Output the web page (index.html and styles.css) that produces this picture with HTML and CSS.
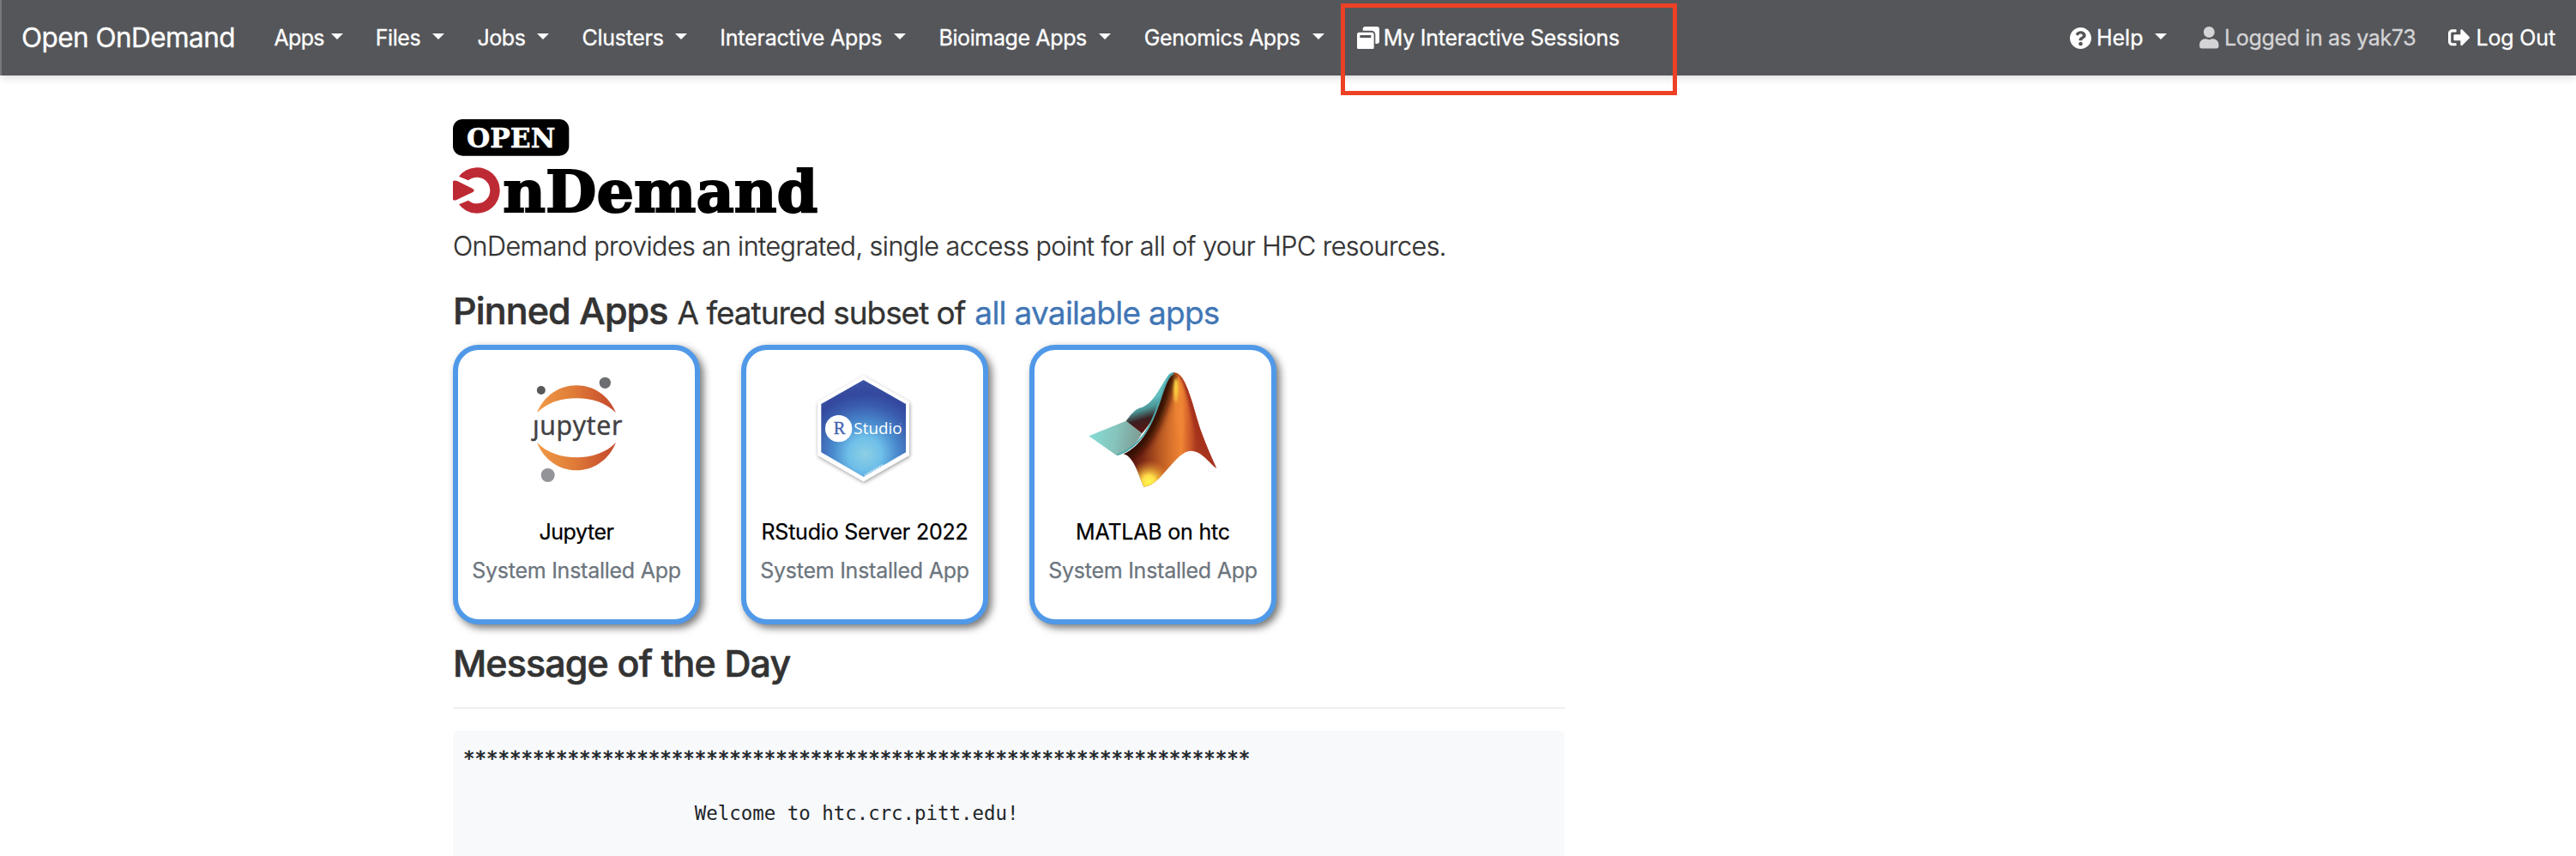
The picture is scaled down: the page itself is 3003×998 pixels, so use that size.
FILE: index.html
```
<!DOCTYPE html>
<html lang="en">
<head>
<meta charset="utf-8">
<title>Open OnDemand</title>
<link rel="stylesheet" href="styles.css">
</head>
<body>
<header class="navbar">
  <a class="brand">Open OnDemand</a>
  <nav class="menu">
    <a class="item apps"><span>Apps</span><i class="caret"></i></a>
    <a class="item files"><span>Files</span><i class="caret"></i></a>
    <a class="item jobs"><span>Jobs</span><i class="caret"></i></a>
    <a class="item clusters"><span>Clusters</span><i class="caret"></i></a>
    <a class="item interactive"><span>Interactive Apps</span><i class="caret"></i></a>
    <a class="item bioimage"><span>Bioimage Apps</span><i class="caret"></i></a>
    <a class="item genomics"><span>Genomics Apps</span><i class="caret"></i></a>
    <a class="item sessions">
      <svg class="icon-windows" viewBox="0 0 78 80"><path d="M20 14V9a9 9 0 0 1 9-9h40a9 9 0 0 1 9 9v42a9 9 0 0 1-9 9h-5V28a14 14 0 0 0-14-14z"/><path fill-rule="evenodd" d="M8 20h43a8 8 0 0 1 8 8v44a8 8 0 0 1-8 8H8a8 8 0 0 1-8-8V28a8 8 0 0 1 8-8zm4 10a2 2 0 0 0-2 2v7h39v-7a2 2 0 0 0-2-2z"/></svg>
      <span>My Interactive Sessions</span>
    </a>
  </nav>
  <nav class="account">
    <a class="item help">
      <svg class="icon-help" viewBox="8 8 496 496"><path d="M504 256c0 136.997-111.043 248-248 248S8 392.997 8 256C8 119.083 119.043 8 256 8s248 111.083 248 248zM262.655 90c-54.497 0-89.255 22.957-116.549 63.758-3.536 5.286-2.353 12.415 2.715 16.258l34.699 26.31c5.205 3.947 12.621 3.008 16.665-2.122 17.864-22.658 30.113-35.797 57.303-35.797 20.429 0 45.698 13.148 45.698 32.958 0 14.976-12.363 22.667-32.534 33.976C247.128 238.528 216 254.941 216 296v4c0 6.627 5.373 12 12 12h56c6.627 0 12-5.373 12-12v-1.333c0-28.462 83.186-29.647 83.186-106.667 0-58.002-60.165-102-116.531-102zM256 338c-25.365 0-46 20.635-46 46 0 25.364 20.635 46 46 46s46-20.636 46-46c0-25.364-20.635-46-46-46z"/></svg>
      <span>Help</span><i class="caret"></i>
    </a>
    <span class="item user">
      <svg class="icon-user" viewBox="0 0 448 512"><path d="M224 256c70.7 0 128-57.3 128-128S294.7 0 224 0 96 57.3 96 128s57.3 128 128 128zm89.600 32h-16.700c-22.200 10.200-46.900 16-72.900 16s-50.600-5.800-72.900-16h-16.700C60.200 288 0 348.200 0 422.400V464c0 26.500 21.500 48 48 48h352c26.500 0 48-21.500 48-48v-41.600c0-74.200-60.200-134.400-134.400-134.400z"/></svg>
      <span>Logged in as yak73</span>
    </span>
    <a class="item logout">
      <svg class="icon-logout" viewBox="0 0 512 512"><path d="M497 273L329 441c-15 15-41 4.500-41-17v-96H152c-13.300 0-24-10.700-24-24v-96c0-13.300 10.700-24 24-24h136V88c0-21.400 25.900-32 41-17l168 168c9.300 9.400 9.300 24.600 0 34zM192 436v-40c0-6.600-5.400-12-12-12H96c-17.700 0-32-14.300-32-32V160c0-17.700 14.300-32 32-32h84c6.600 0 12-5.400 12-12V76c0-6.600-5.400-12-12-12H96c-53 0-96 43-96 96v192c0 53 43 96 96 96h84c6.600 0 12-5.400 12-12z"/></svg>
      <span>Log Out</span>
    </a>
  </nav>
  <div class="highlight"></div>
</header>

<main class="page">
  <svg class="logo" viewBox="84 36 1320 390" role="img" aria-label="Open OnDemand">
    <rect x="84" y="57" width="406" height="128" rx="34"/>
    <text class="slab" x="132" y="156" font-size="96" textLength="310" lengthAdjust="spacingAndGlyphs" fill="#fff" stroke="#fff" stroke-width="1.500">OPEN</text>
    <path fill="#be2a34" d="M105 257A80 80 0 1 1 105 355L138 341A46 46 0 1 0 138 271Z"/>
    <path fill="#be2a34" d="M84 274Q90 269 99 273L152 299Q164 306 152 313L97 339Q88 343 84 338Z"/>
    <text class="slab" x="259" y="380" font-size="203" textLength="1101" lengthAdjust="spacingAndGlyphs" stroke="#000" stroke-width="6">nDemand</text>
  </svg>
  <p class="tagline">OnDemand provides an integrated, single access point for all of your HPC resources.</p>

  <h2 class="heading pinned">Pinned Apps <small>A featured subset of</small> <a>all available apps</a></h2>

  <section class="cards">
    <article class="card">
      <svg class="art" viewBox="102 54 828 570">
        <defs><linearGradient id="jup" x1="378" x2="654" y1="0" y2="0" gradientUnits="userSpaceOnUse"><stop offset="0" stop-color="#f09a48"/><stop offset=".45" stop-color="#e07d38"/><stop offset=".85" stop-color="#cb5530"/><stop offset="1" stop-color="#c44c2e"/></linearGradient></defs>
        <g fill="url(#jup)"><path d="M378 274C403 213 456 178 516 178S629 213 654 274C620 239 570 223 516 223S412 239 378 274Z"/><path d="M378 378C403 439 456 475 516 475S629 439 654 378C620 413 570 430 516 430S412 413 378 378Z"/></g>
        <circle cx="392.500" cy="195" r="15" fill="#58585a"/><circle cx="616" cy="169" r="20" fill="#6d6e71"/><circle cx="416" cy="492" r="24" fill="#929497"/>
        <text class="humanist" x="363" y="351" font-size="91" textLength="313" fill="#414042" stroke="#414042" stroke-width="1.500">jupyter</text>
        <path fill="#fff" d="M362 272h26v26h-26z"/>
      </svg>
      <h3 class="app tight">Jupyter</h3>
      <p class="kind">System Installed App</p>
    </article>
    <article class="card">
      <svg class="art" viewBox="60 54 828 570">
        <defs>
          <radialGradient id="rs" cx="475" cy="418" r="265" gradientUnits="userSpaceOnUse"><stop offset="0" stop-color="#8dcfe4"/><stop offset=".22" stop-color="#6ebfe9"/><stop offset=".42" stop-color="#4a8bce"/><stop offset=".65" stop-color="#3a5cae"/><stop offset=".8" stop-color="#33489e"/><stop offset="1" stop-color="#3d55a5"/></radialGradient>
          <filter id="sh" x="-20%" y="-20%" width="140%" height="140%"><feDropShadow dx="2" dy="5" stdDeviation="6" flood-opacity=".4"/></filter>
        </defs>
        <path fill="#fff" filter="url(#sh)" d="M470 145L630 236V422L470 514L310 422V236Z"/>
        <path fill="url(#rs)" d="M470 159L618 243V412L470 498L322 412V243Z"/>
        <circle cx="383" cy="329" r="47" fill="#fff"/>
        <text class="serif" x="365" y="347" font-size="62" textLength="41" fill="#3f64b0" stroke="#3f64b0">R</text>
        <text class="humanist" x="436" y="349" font-size="57" textLength="169" lengthAdjust="spacingAndGlyphs" fill="#fff">Studio</text>
        <circle cx="599" cy="312" r="2.500" fill="none" stroke="#b9a4c8"/>
        <path d="M474 492L538 455" stroke="#d5e8f4" stroke-width="5" stroke-dasharray="3 2"/>
      </svg>
      <h3 class="app">RStudio Server 2022</h3>
      <p class="kind">System Installed App</p>
    </article>
    <article class="card">
      <svg class="art" viewBox="78 54 828 570">
        <defs>
          <linearGradient id="m1" x1="268" y1="340" x2="450" y2="370" gradientUnits="userSpaceOnUse"><stop offset="0" stop-color="#85ddd5"/><stop offset=".5" stop-color="#86c5bd"/><stop offset="1" stop-color="#7d9a92"/></linearGradient>
          <linearGradient id="m2" x1="440" y1="235" x2="470" y2="335" gradientUnits="userSpaceOnUse"><stop offset="0" stop-color="#62bfc0"/><stop offset=".3" stop-color="#4b9596"/><stop offset=".62" stop-color="#3b1f20"/><stop offset="1" stop-color="#5a1815"/></linearGradient>
          <linearGradient id="m3" x1="390" y1="0" x2="715" y2="0" gradientUnits="userSpaceOnUse"><stop offset="0" stop-color="#4a120e"/><stop offset=".2" stop-color="#7a2916"/><stop offset=".38" stop-color="#b65722"/><stop offset=".52" stop-color="#dc742c"/><stop offset=".62" stop-color="#f08534"/><stop offset=".7" stop-color="#d2602a"/><stop offset=".78" stop-color="#a93a20"/><stop offset="1" stop-color="#a6321d"/></linearGradient>
          <radialGradient id="m4" cx="478" cy="515" r="75" gradientUnits="userSpaceOnUse"><stop offset="0" stop-color="#fff750"/><stop offset=".3" stop-color="#ffdc48"/><stop offset="1" stop-color="#f08a2c" stop-opacity="0"/></radialGradient>
          <clipPath id="mc"><path d="M567 133C598 133 620 200 645 290C664 357 692 419 715 468C690 452 665 408 625 407C570 408 520 530 460 533C445 500 425 425 390 418C460 385 490 310 515 240C535 180 545 135 567 133Z"/></clipPath>
          <filter id="b8"><feGaussianBlur stdDeviation="13"/></filter>
          <filter id="b4" x="-100%" width="300%"><feGaussianBlur stdDeviation="5"/></filter>
        </defs>
        <path fill="url(#m1)" d="M268 355L398 302L454 346Q425 400 385 417L365 423Z"/>
        <path fill="url(#m2)" d="M398 302C418 276 428 264 445 257C493 247 518 180 545 143C553 134 558 133 567 133C545 180 520 270 454 346Z"/>
        <g clip-path="url(#mc)">
          <path fill="url(#m3)" d="M380 120H720V540H380Z"/>
          <path d="M385 425C460 385 490 320 518 245C538 185 543 145 560 128" fill="none" stroke="#300806" stroke-width="50" filter="url(#b8)"/>
          <path d="M577 135C612 180 625 290 655 400L740 480V120Z" fill="#a6331d" filter="url(#b4)"/>
          <ellipse cx="573" cy="195" rx="8" ry="42" fill="#ffe044" filter="url(#b4)"/>
          <path d="M571 190Q568 280 590 370Q612 300 575 190Z" fill="#f08734" filter="url(#b8)"/>
          <path fill="url(#m4)" d="M390 430H560V540H390Z"/>
        </g>
        <path d="M368 421C455 390 488 312 513 240C532 183 545 142 564 135" fill="none" stroke="#4fa9aa" stroke-width="6"/>
      </svg>
      <h3 class="app">MATLAB on htc</h3>
      <p class="kind">System Installed App</p>
    </article>
  </section>

  <h2 class="heading motd-title">Message of the Day</h2>
  <pre class="motd"><span class="stars">********************************************************************</span>

                    Welcome to htc.crc.pitt.edu!
</pre>
</main>
</body>
</html>
```
FILE: styles.css
```
* { box-sizing: border-box; }
html, body { margin: 0; height: 998px; overflow: hidden; background: #fff; }
body { font-family: Inter, "Liberation Sans", sans-serif; color: #333; }
h2, h3, p, pre { margin: 0; }

.navbar {
  position: relative;
  display: flex;
  align-items: center;
  height: 88px;
  padding: 0 24px 0 23px;
  background: #55565a;
  border-left: 2px solid #77787b;
  box-shadow: 0 2px 10px rgba(0, 0, 0, .16);
  color: #fff;
  -webkit-text-stroke: .3px currentColor;
}
.brand { width: 294.500px; font-size: 31.5px; letter-spacing: -.55px; line-height: 86px; white-space: nowrap; }
.menu, .account { display: flex; align-items: center; gap: 38.2px; }
.account { margin-left: auto; gap: 38px; }
.item { display: flex; align-items: center; font-size: 25px; line-height: 88px; letter-spacing: -.4px; white-space: nowrap; }
.item svg { fill: currentColor; flex: none; }
.caret { width: 0; height: 0; border: 7px solid transparent; border-top-color: currentColor; border-bottom: 0; margin-bottom: 3px; }
.apps span { width: 66px; letter-spacing: -.7px; }
.files span { width: 66.5px; }
.jobs span { width: 70px; }
.clusters span { width: 108.5px; letter-spacing: -.3px; }
.interactive span { width: 203px; letter-spacing: -.2px; }
.bioimage span { width: 187px; letter-spacing: -.38px; }
.genomics span { width: 196px; letter-spacing: -.35px; }
.sessions { gap: 5px; letter-spacing: -.25px; }
.icon-windows { width: 26px; height: 26.7px; }
.icon-help { width: 25px; height: 25px; margin-right: 6px; }
.help span { width: 68.5px; letter-spacing: 0; }
.icon-user { width: 22.6px; height: 25.5px; margin-right: 6px; }
.user { width: 252px; color: #d4d4d6; letter-spacing: -.36px; }
.icon-logout { width: 25.5px; height: 25.5px; margin-right: 6.5px; }
.logout { letter-spacing: -.15px; }

/* Callout frame drawn over the sessions link */
.highlight { position: absolute; left: 1561px; top: 4px; width: 392px; height: 107px; border: 5px solid #ec4125; }

.page { width: 1296px; margin-left: 528px; padding-top: 44px; }
.logo { display: block; width: 440px; height: 130px; overflow: visible; }
.slab { font-family: "DejaVu Serif", serif; font-weight: 700; }
.serif { font-family: "Liberation Serif", serif; }
.humanist { font-family: "Open Sans", "Noto Sans", sans-serif; }
.tagline { font-size: 30.5px; font-weight: 300; line-height: 50px; letter-spacing: -.52px; white-space: nowrap; -webkit-text-stroke: .3px currentColor; }

.heading { font-size: 43px; font-weight: 500; line-height: 52px; letter-spacing: -.88px; white-space: nowrap; -webkit-text-stroke: .6px currentColor; }
.pinned { display: flex; align-items: baseline; gap: 11px; height: 52px; margin-top: 24px; }
.pinned small, .pinned a { font-size: 37px; font-weight: 400; -webkit-text-stroke: .3px currentColor; }
.pinned small { letter-spacing: -1.05px; }
.pinned a { color: #4176b5; letter-spacing: -.74px; }

.cards { display: flex; gap: 48px; margin-top: 14px; }
.card {
  width: 288px;
  height: 326px;
  border: 6px solid #5099e8;
  border-radius: 30px;
  background: #fff;
  box-shadow: 4px 4px 10px rgba(0, 0, 0, .55);
  text-align: center;
  white-space: nowrap;
  -webkit-text-stroke: .25px currentColor;
}
.art { display: block; width: 276px; height: 190px; -webkit-text-stroke: 0; }
.app { color: #000; font-size: 25px; font-weight: 400; line-height: 44px; letter-spacing: -.2px; }
.tight { letter-spacing: -.45px; }
.kind { color: #6c757d; font-size: 25px; line-height: 46px; letter-spacing: -.25px; }

.motd-title { height: 79px; margin-top: 19px; border-bottom: 1px solid #e1e1e3; }
.motd {
  height: 160px;
  margin-top: 26px;
  padding: 16px 12px;
  border-radius: 7px;
  background: #f8f9fb;
  color: #212529;
  font: 22.42px/32px "DejaVu Sans Mono", monospace;
}
.stars { -webkit-text-stroke: .7px currentColor; }
```
